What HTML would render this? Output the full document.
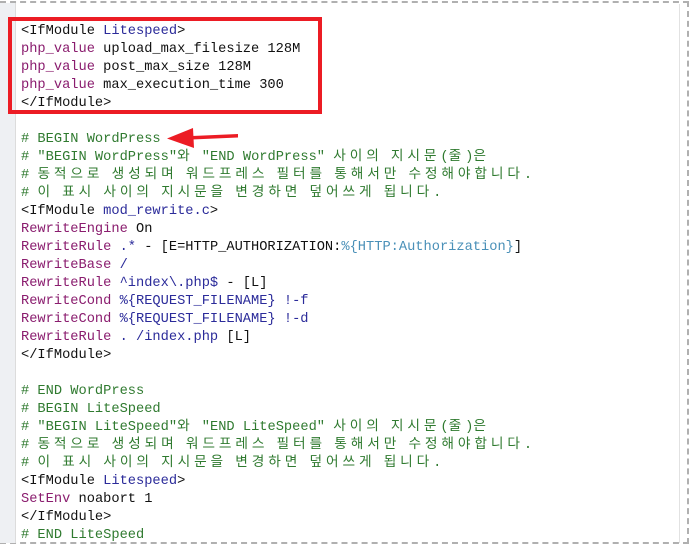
<!DOCTYPE html>
<html><head><meta charset="utf-8"><style>
html,body{margin:0;padding:0;background:#fff;}
body{width:692px;height:547px;position:relative;overflow:hidden;}
.frame{position:absolute;left:0;top:1px;width:689px;height:543px;border-top:2px dashed #b0b0b0;border-right:2px dashed #b0b0b0;border-bottom:2px dashed #b0b0b0;box-sizing:border-box;}
.gut{position:absolute;left:0;top:3px;width:15px;height:540px;background:#eef0f3;border-right:1px solid #dcdcdc;}
.vline{position:absolute;left:679px;top:4px;width:1px;height:539px;background:#e2e2e2;}
.code{position:absolute;left:21px;top:23px;margin:0;font-family:"Liberation Mono",monospace;font-size:13.7px;color:#111;}
.code div{height:18px;line-height:18px;white-space:pre;overflow:visible;}
.k{font-family:"Noto Sans CJK KR","NanumGothic",sans-serif;letter-spacing:3.9px;line-height:0;}
.d{color:#8a1c6e;}
.v{color:#2b2b9a;}
.c{color:#2f7a2f;}
.s{color:#4a90b8;}
.box{position:absolute;left:8px;top:17px;width:314px;height:97px;border:4px solid #ec1c24;box-sizing:border-box;}
</style></head><body>
<div class="frame"></div>
<div class="gut"></div>
<div class="vline"></div>
<div class="code">
<div>&lt;IfModule <span class="v">Litespeed</span>&gt;</div>
<div><span class="d">php_value</span> upload_max_filesize 128M</div>
<div><span class="d">php_value</span> post_max_size 128M</div>
<div><span class="d">php_value</span> max_execution_time 300</div>
<div>&lt;/IfModule&gt;</div>
<div> </div>
<div class="c"># BEGIN WordPress</div>
<div class="c"># "BEGIN WordPress"<span class="k">와</span> "END WordPress" <span class="k">사이의</span> <span class="k">지시문</span>(<span class="k">줄</span>)<span class="k">은</span></div>
<div class="c"># <span class="k">동적으로</span> <span class="k">생성되며</span> <span class="k">워드프레스</span> <span class="k">필터를</span> <span class="k">통해서만</span> <span class="k">수정해야합니다</span>.</div>
<div class="c"># <span class="k">이</span> <span class="k">표시</span> <span class="k">사이의</span> <span class="k">지시문을</span> <span class="k">변경하면</span> <span class="k">덮어쓰게</span> <span class="k">됩니다</span>.</div>
<div>&lt;IfModule <span class="v">mod_rewrite.c</span>&gt;</div>
<div><span class="d">RewriteEngine</span> On</div>
<div><span class="d">RewriteRule</span> <span class="v">.*</span> - [E=HTTP_AUTHORIZATION:<span class="s">%{HTTP:Authorization}</span>]</div>
<div><span class="d">RewriteBase</span> <span class="v">/</span></div>
<div><span class="d">RewriteRule</span> <span class="v">^index\.php$</span> - [L]</div>
<div><span class="d">RewriteCond</span> <span class="v">%{REQUEST_FILENAME} !-f</span></div>
<div><span class="d">RewriteCond</span> <span class="v">%{REQUEST_FILENAME} !-d</span></div>
<div><span class="d">RewriteRule</span> <span class="v">. /index.php</span> [L]</div>
<div>&lt;/IfModule&gt;</div>
<div> </div>
<div class="c"># END WordPress</div>
<div class="c"># BEGIN LiteSpeed</div>
<div class="c"># "BEGIN LiteSpeed"<span class="k">와</span> "END LiteSpeed" <span class="k">사이의</span> <span class="k">지시문</span>(<span class="k">줄</span>)<span class="k">은</span></div>
<div class="c"># <span class="k">동적으로</span> <span class="k">생성되며</span> <span class="k">워드프레스</span> <span class="k">필터를</span> <span class="k">통해서만</span> <span class="k">수정해야합니다</span>.</div>
<div class="c"># <span class="k">이</span> <span class="k">표시</span> <span class="k">사이의</span> <span class="k">지시문을</span> <span class="k">변경하면</span> <span class="k">덮어쓰게</span> <span class="k">됩니다</span>.</div>
<div>&lt;IfModule <span class="v">Litespeed</span>&gt;</div>
<div><span class="d">SetEnv</span> noabort 1</div>
<div>&lt;/IfModule&gt;</div>
<div class="c"># END LiteSpeed</div>
</div>
<div class="box"></div>
<svg style="position:absolute;left:0;top:0" width="692" height="547">
<path d="M238 134 L192 136 L192 139.5 L238 137.5 Z" fill="#ec1c24"/>
<path d="M167 138.5 L193 128 L194 148 Z" fill="#ec1c24"/>
</svg>
</body></html>
